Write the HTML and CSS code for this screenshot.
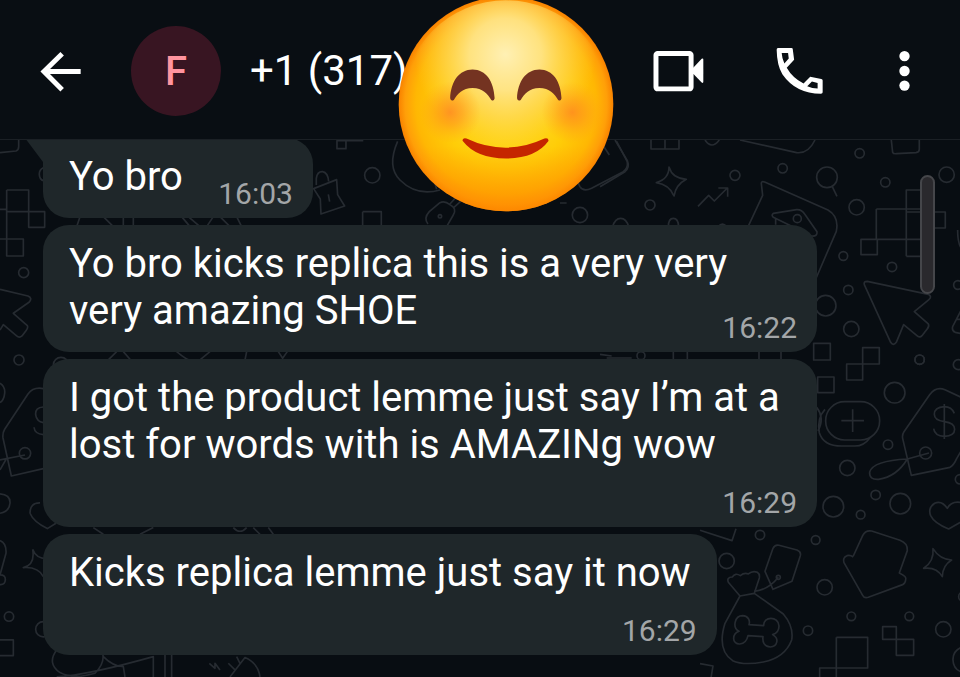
FILE: index.html
```html
<!DOCTYPE html>
<html lang="en">

<head>
	<meta charset="utf-8">
	<meta name="viewport" content="width=device-width, initial-scale=1">
	<title>Chat</title>
	<link rel="stylesheet" href="styles.css">
</head>

<body>
	<header class="topbar">
		<button class="icon-btn" type="button" aria-label="Back">
			<svg width="41" height="41" viewBox="120 148 124 124"><path d="M243 210H133M187 156L132 210L187 265" fill="none" stroke="#fff" stroke-width="15"/></svg>
		</button>
		<div class="avatar">F</div>
		<h1 class="contact">+1 (317)</h1>
		<nav class="actions">
			<button class="icon-btn" type="button" aria-label="Video call">
				<svg width="51" height="42" viewBox="68 88 154 126"><rect x="77" y="98" width="106" height="107" rx="5" fill="none" stroke="#fff" stroke-width="15"/><path d="M188 143L215 114Q220 111 220 117V183Q220 189 215 186L188 158Z" fill="#fff"/></svg>
			</button>
			<button class="icon-btn" type="button" aria-label="Voice call">
				<svg width="47" height="47" viewBox="443 82 140 140"><path fill="#fff" fill-rule="evenodd" d="M443 82H483Q487 82 487 86L491 117L469 141Q486 171 519 188L539 168L572 174Q576 175 576 179V214Q576 218 571 218Q496 218 456 160Q440 134 439 87Q439 82 443 82ZM454 97Q455 114 462 128L475 113L473 97ZM544 182L530 196Q545 203 561 203V186Z"/></svg>
			</button>
			<button class="icon-btn" type="button" aria-label="More options">
				<svg width="11" height="42" viewBox="808 88 34 126" fill="#fff"><circle cx="825" cy="105" r="16"/><circle cx="825" cy="151" r="16"/><circle cx="825" cy="196" r="16"/></svg>
			</button>
		</nav>
	</header>

	<!-- smiley sticker over the number -->
	<svg class="sticker" width="216" height="216" viewBox="24 -10 646 646" role="img" aria-label="Smiling face">
		<defs>
			<radialGradient id="face" cx="347" cy="313" r="321" gradientUnits="userSpaceOnUse">
				<stop offset="0" stop-color="#ffdf3a"/>
				<stop offset=".6" stop-color="#ffcd08"/>
				<stop offset=".84" stop-color="#ffb703"/>
				<stop offset=".94" stop-color="#ff9f08"/>
				<stop offset="1" stop-color="#f98200"/>
			</radialGradient>
			<radialGradient id="shine" cx="345" cy="165" r="270" gradientUnits="userSpaceOnUse">
				<stop offset="0" stop-color="#fff0b4"/>
				<stop offset=".4" stop-color="#ffe58c" stop-opacity=".9"/>
				<stop offset=".7" stop-color="#ffd65c" stop-opacity=".55"/>
				<stop offset="1" stop-color="#ffcf38" stop-opacity="0"/>
			</radialGradient>
			<linearGradient id="chin" x1="0" y1="440" x2="0" y2="634" gradientUnits="userSpaceOnUse">
				<stop offset="0" stop-color="#ff9600" stop-opacity="0"/>
				<stop offset="1" stop-color="#ff8a00" stop-opacity=".75"/>
			</linearGradient>
			<radialGradient id="cheek">
				<stop offset="0" stop-color="#ff8024" stop-opacity=".75"/>
				<stop offset=".4" stop-color="#ff8a20" stop-opacity=".5"/>
				<stop offset="1" stop-color="#ff9d20" stop-opacity="0"/>
			</radialGradient>
		</defs>
		<circle cx="347" cy="313" r="321" fill="url(#face)"/>
		<circle cx="347" cy="313" r="310" fill="url(#shine)"/>
		<circle cx="347" cy="313" r="321" fill="url(#chin)"/>
		<circle cx="180" cy="338" r="92" fill="url(#cheek)"/>
		<circle cx="545" cy="338" r="92" fill="url(#cheek)"/>
		<g fill="#743321">
			<path id="eye" d="M180 296C182 246 207 210 247 210S311 246 313 296Q311 306 303 301C292 282 277 265 247 265S202 282 191 301Q182 306 180 296Z"/>
			<use href="#eye" x="200"/>
		</g>
		<path fill="#c52500" d="M217 423Q217 413 229 416Q345 471 462 416Q475 413 474 424Q436 476 347 476T217 423Z"/>
	</svg>

	<main class="chat">
		<!-- wallpaper doodles -->
		<svg class="wallpaper" viewBox="0 0 960 677" preserveAspectRatio="xMidYMin slice" aria-hidden="true">
			<g transform="translate(600 130) scale(.3333)">
				<path d="M45 30L82 92Q90 112 75 125L0 170M5 40L28 75"/>
				<path d="M153 20V57H237V20M195 20V57M315 30Q335 60 358 30M420 30L590 68Q625 72 645 30M874 30L878 67Q880 72 890 71L948 68Q958 67 958 58V30"/>
				<path d="M207 111Q217 145 259 148Q228 164 222 198Q208 164 169 158Q207 147 207 111Z"/>
				<path d="M294 229L326 196L343 213L382 174M355 174H383V200"/>
				<circle cx="405" cy="136" r="15"/><circle cx="548" cy="115" r="14"/><circle cx="150" cy="225" r="15"/><circle cx="779" cy="70" r="14"/><circle cx="856" cy="157" r="14"/><circle cx="770" cy="232" r="23"/><circle cx="1040" cy="134" r="23"/>
				<circle cx="681" cy="142" r="31"/><path d="M697 170L711 199"/>
				<path d="M38 290Q45 265 62 265T86 290M205 290Q205 265 220 265T236 290V310M355 290Q367 275 380 290"/>
				<path d="M446 286L488 196L484 160Q484 152 494 156L684 240Q718 260 709 304L646 450"/>
				<path d="M520 250Q513 256 520 262L635 318Q653 320 651 305L614 252Q605 238 590 239ZM527 265V284"/><circle cx="592" cy="266" r="12"/>
				<path d="M783 328H832V374H783ZM829 237H962M829 237V328H962M919 379V180H965M919 379H965M919 246H1036V294H1003M1073 300Q1073 345 1088 360"/>
				<circle cx="730" cy="378" r="13"/><circle cx="876" cy="411" r="14"/><circle cx="745" cy="480" r="14"/><circle cx="677" cy="527" r="31"/><circle cx="754" cy="597" r="23"/><circle cx="959" cy="689" r="14"/><circle cx="1074" cy="465" r="13"/>
				<path d="M802 454L985 493Q998 500 986 510L943 545L985 582Q989 590 981 598L966 617Q959 625 950 616L911 584L889 637Q880 649 872 637L793 464Q790 454 802 454Z"/>
				<path d="M1088 532L1058 590Q1055 603 1066 607L1088 612M1070 568H1088"/>
				<path d="M0 673L35 678M95 684H20M220 660V690M262 660V690M477 660V690M543 660V690"/><circle cx="123" cy="677" r="12"/>
			</g>
			<g transform="translate(700 350) scale(.3333)">
				<path d="M341 -20H391V30H341ZM353 81H402V128H353ZM488 -7H538V42H440V90H488Z"/>
				<circle cx="659" cy="29" r="14"/><circle cx="584" cy="128" r="31"/><circle cx="775" cy="44" r="15"/><circle cx="564" cy="284" r="14"/><circle cx="442" cy="354" r="23"/><circle cx="527" cy="435" r="14"/><circle cx="601" cy="461" r="31"/><circle cx="400" cy="470" r="31"/><circle cx="482" cy="494" r="13"/><circle cx="180" cy="555" r="14"/><circle cx="347" cy="570" r="13"/><circle cx="80" cy="633" r="23"/><circle cx="374" cy="712" r="23"/><circle cx="454" cy="799" r="13"/><circle cx="628" cy="799" r="13"/><circle cx="730" cy="838" r="23"/><circle cx="324" cy="842" r="14"/><circle cx="780" cy="388" r="14"/><circle cx="790" cy="740" r="14"/>
				<rect x="377" y="155" width="162" height="115" rx="57"/>
				<path d="M375 178Q350 205 358 248Q370 288 425 288H465Q492 288 510 263M350 172Q375 205 354 243M458 178V246M424 212H492"/>
				<path d="M790 145L735 119Q708 108 689 134L612 245Q606 254 608 265L634 376L750 352Q762 345 770 326L790 292"/>
				<path d="M763 190Q755 170 733 170Q703 172 703 193Q703 211 733 215Q764 219 764 238Q764 258 733 259Q704 258 701 236M733 162V267"/>
				<circle cx="677" cy="309" r="18"/><path d="M687 309L622 327Q520 332 509 366Q507 390 536 388Q590 380 622 327"/>
				<path d="M790 459Q755 450 742 475Q725 450 704 460Q683 474 692 497Q703 520 746 537L790 512"/>
				<path d="M699 596Q720 629 755 630Q728 646 727 680Q710 650 671 655Q703 634 699 596Z"/>
				<path d="M460 618L488 557Q496 540 515 543L600 571Q624 580 622 602L598 669Q622 680 617 690Q616 700 608 704L505 742Q493 746 488 736L432 638Q427 623 441 617Q450 614 460 621"/>
				<path d="M0 541L96 572L108 536"/>
				<path d="M195 664L219 595Q225 583 237 586L291 600Q304 605 301 617L276 694L219 718ZM162 724Q205 720 235 682"/><circle cx="235" cy="682" r="6"/>
				<path d="M120 738L85 697Q79 682 97 681Q106 667 121 677Q133 667 145 672Q158 661 172 667Q180 672 178 684L163 730ZM120 738L75 820Q50 900 98 932Q130 947 190 936Q255 923 275 870Q282 830 250 792L163 730"/>
				<path d="M147 824L191 827C190 798 235 797 237 828C237 846 227 851 218 854C239 866 232 890 211 891C192 890 187 875 189 860L144 857C137 890 100 888 101 865C101 853 109 847 117 844C96 833 104 797 128 797C145 798 151 812 147 824Z"/>
				<path d="M409 862H503V954H359V990M409 862V990M548 830H589V868H548ZM589 868H641V916H589ZM0 941L39 948L32 990M790 890Q758 900 759 930T790 968"/>
			</g>
			<g transform="scale(.3333)">
				<path d="M0 458L48 453Q56 450 56 440V420M130 503Q117 509 118 524T130 542M0 628H20V740M20 570H86V682H134V635H20V570M0 717H70V768H20V717"/>
				<path d="M1011 422H1038V446H1011V422H1090M1088 635H1144V690H1088V635M1088 636V700"/>
				<path d="M949 555V535Q952 514 968 515Q984 518 986 544M941 566L1010 539L1013 584L1034 618L963 642L961 597ZM985 583L989 605"/>
				<circle cx="1117" cy="526" r="23"/><path d="M1193 424Q1160 500 1200 540Q1250 590 1320 570M1300 530L1310 568M1284 672Q1270 655 1288 635L1320 608Q1334 601 1350 614Q1372 625 1360 645L1340 680M1350 612L1370 590M1362 622L1382 604"/><circle cx="1320" cy="649" r="5"/>
				<path d="M230 680L240 650M310 650L340 680M370 650V680M400 650V680M545 650L570 680M565 650L600 680M620 680L640 650M660 650L690 680M710 650L725 680"/>
				<circle cx="71" cy="818" r="15"/><circle cx="57" cy="1080" r="15"/><circle cx="183" cy="1095" r="23"/>
				<path d="M0 868L84 888Q98 894 88 906L40 940L82 977Q85 983 79 991L66 1008Q58 1015 49 1007L10 974L0 990"/>
				<path d="M325 1080L350 1055M370 1055L392 1080M530 1055Q560 1080 570 1080M630 1055L600 1080M740 1055L735 1080M835 1055L848 1075L862 1055"/>
				<path d="M0 1150Q16 1160 14 1180T0 1208M130 1166Q100 1160 84 1182L14 1288Q7 1300 9 1314L34 1428L130 1406M130 1221Q105 1222 107 1245Q110 1265 130 1268M102 1282Q104 1302 130 1304"/>
				<circle cx="75" cy="1360" r="17"/><path d="M75 1365L0 1380M20 1375L0 1410M0 1482Q32 1485 30 1510T0 1540M90 1540Q90 1508 120 1509M90 1540Q100 1565 142 1586L168 1570"/>
				<path d="M0 1622Q20 1630 18 1660L0 1725Q17 1725 16 1740T0 1754M98 1648Q108 1676 140 1676M98 1648Q106 1695 70 1703Q115 1700 130 1730"/>
				<circle cx="27" cy="1850" r="14"/><circle cx="130" cy="1888" r="23"/><path d="M0 1920H40V1967H0M170 1950Q140 1990 180 2018Q220 2040 285 2020Q315 1990 308 1960M170 2031Q260 2026 460 1970V2031M310 1970Q340 2000 370 2000L375 2031M495 1965V2031M515 1965V2031M628 1990L645 2005V1990L660 2010M685 1990L705 2010M710 1970L720 1990M690 2031L735 1973Q775 1990 780 2031"/>
				<path d="M280 1583L310 1603M420 1603L460 1583M700 1583Q720 1605 740 1583M760 1583L780 1603M805 1583L820 1603"/>
				<circle cx="1740" cy="645" r="23"/><path d="M1850 424L1882 485Q1885 505 1870 515L1775 565Q1750 577 1740 560L1720 520M1680 609H1700"/>
			</g>
		</svg>

		<div class="messages">
			<article class="message first inline">
				<p class="text">Yo bro</p>
				<time class="time">16:03</time>
			</article>
			<article class="message inline">
				<p class="text">Yo bro kicks replica this is a very very very amazing SHOE</p>
				<time class="time">16:22</time>
			</article>
			<article class="message">
				<p class="text">I got the product lemme just say I’m at a lost for words with is AMAZINg wow</p>
				<time class="time">16:29</time>
			</article>
			<article class="message">
				<p class="text">Kicks replica lemme just say it now</p>
				<time class="time">16:29</time>
			</article>
		</div>
		<div class="scrollbar"></div>
	</main>
</body>

</html>
```

FILE: styles.css
```css
* {
	box-sizing: border-box;
}

body {
	margin: 0;
	min-height: 100vh;
	display: flex;
	flex-direction: column;
	position: relative;
	overflow: hidden;
	background-color: #080d12;
	color: #fff;
	font-family: Roboto, "Liberation Sans", sans-serif;
}

.topbar {
	display: flex;
	align-items: center;
	padding: 26px 50px 23px 40px;
	background-color: #090e13;
	border-bottom: 1px solid #1b2025;
	position: relative;
	z-index: 1;
}

.icon-btn {
	padding: 0;
	border: 0;
	background: none;
	cursor: pointer;
}

.icon-btn svg {
	display: block;
	overflow: visible;
}

.avatar {
	width: 90px;
	height: 90px;
	margin: 0 29px 0 50px;
	border-radius: 50%;
	background-color: #381522;
	color: #ff949f;
	font-size: 40px;
	font-weight: 500;
	line-height: 92px;
	text-align: center;
}

.contact {
	margin: 0;
	font-size: 42px;
	font-weight: 400;
	line-height: 48px;
}

.actions {
	display: flex;
	align-items: center;
	gap: 74px;
	margin-left: auto;
}

.sticker {
	position: absolute;
	top: -4px;
	left: 398px;
	z-index: 2;
}

.chat {
	flex: 1;
}

.wallpaper {
	position: absolute;
	top: 0;
	left: 0;
	width: 100%;
	height: 100%;
	fill: none;
	stroke: #262b31;
	stroke-width: 5;
	stroke-linejoin: round;
}

.messages {
	display: flex;
	flex-direction: column;
	align-items: flex-start;
	gap: 7px;
	margin-top: -2px;
	padding: 0 143px 22px 43px;
	position: relative;
}

.message {
	display: flex;
	flex-direction: column;
	padding: 15px 26px 9px 26px;
	border-radius: 26px;
	background-color: #1f272a;
	position: relative;
}

/* bubble tail */
.first::before {
	content: "";
	position: absolute;
	top: 0;
	left: -18px;
	width: 48px;
	height: 28px;
	background-color: #1f272a;
	clip-path: polygon(0 0, 100% 0, 100% 100%, 18px 100%, 18px 24px);
}

.text {
	margin: 0;
	font-size: 40px;
	line-height: 47px;
	position: relative;
}

.time {
	align-self: flex-end;
	margin: 20px -6px 0 0;
	color: #a3a6a8;
	font-size: 30px;
	line-height: 30px;
}

/* time sits beside the last line */
.inline .text::after {
	content: "";
	display: inline-block;
	width: 104px;
}

.inline .time {
	margin-top: -21px;
}

.scrollbar {
	position: absolute;
	top: 175px;
	right: 25px;
	width: 15px;
	height: 119px;
	border: 2px solid #45464a;
	border-radius: 8px;
	background-color: #2a292d;
}
```
